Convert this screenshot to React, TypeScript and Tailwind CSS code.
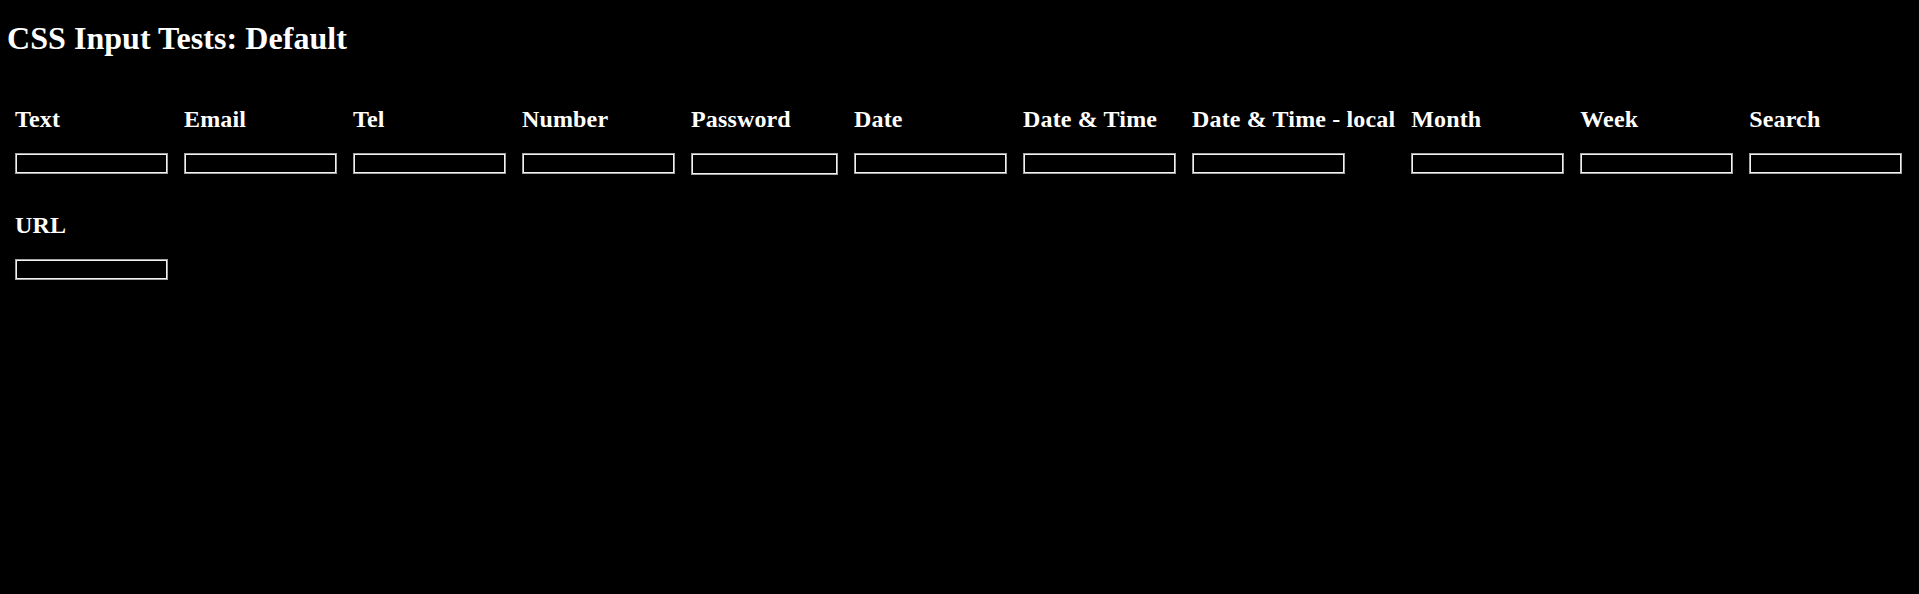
const FIELDS: { label: string; type: string }[] = [
  { label: 'Text', type: 'text' },
  { label: 'Email', type: 'email' },
  { label: 'Tel', type: 'tel' },
  { label: 'Number', type: 'number' },
  { label: 'Password', type: 'password' },
  { label: 'Date', type: 'date' },
  { label: 'Date & Time', type: 'datetime' },
  { label: 'Date & Time - local', type: 'datetime-local' },
  { label: 'Month', type: 'month' },
  { label: 'Week', type: 'week' },
  { label: 'Search', type: 'search' },
  { label: 'URL', type: 'url' },
]

function Field({ label, type }: { label: string; type: string }) {
  const isPassword = type === 'password'

  return (
    <div className="flex flex-col items-start">
      <h2 className="mt-5 mb-5 text-2xl leading-[normal] font-bold tracking-[0.15px]">
        {label}
      </h2>
      <div
        className={`${isPassword ? 'w-[147px] h-[22px]' : 'w-[153px] h-[21px]'} border border-[#a3a3a3] bg-black shadow-[inset_0_0_0_1px_#f2f2f2]`}
        data-type={type}
      />
    </div>
  )
}

export default function App() {
  return (
    <div
      className="min-h-[594px] bg-black px-2 text-white"
      style={{ fontFamily: '"Liberation Serif", "Times New Roman", serif' }}
    >
      <h1 className="pt-5 mb-[21px] -ml-px text-[32px] leading-[normal] font-bold tracking-[0.05px]">
        CSS Input Tests: Default
      </h1>

      <div className="flex flex-wrap gap-x-4 gap-y-[17px] px-[7px] pt-2">
        {FIELDS.map((field) => (
          <Field key={field.label} label={field.label} type={field.type} />
        ))}
      </div>
    </div>
  )
}
